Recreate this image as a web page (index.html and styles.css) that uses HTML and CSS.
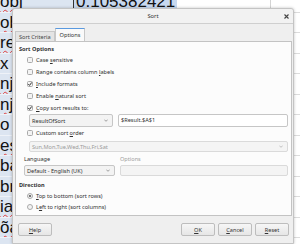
FILE: index.html
```html
<!DOCTYPE html>
<html lang="en">
<head>
  <meta charset="UTF-8" />
  <title>Sort</title>
  <link rel="stylesheet" href="styles.css">
</head>
<body>
  <div class="sheet">
    <div class="row"><div class="ca spell">obj</div><div class="cb"><span class="sel">0.105382421</span></div><div class="cc"></div></div>
    <div class="row"><div class="ca spell">obj</div><div class="cb"></div><div class="cc"></div></div>
    <div class="row"><div class="ca spell">re</div><div class="cb"></div><div class="cc"></div></div>
    <div class="row"><div class="ca">x</div><div class="cb"></div><div class="cc"></div></div>
    <div class="row"><div class="ca spell">nj</div><div class="cb"></div><div class="cc"></div></div>
    <div class="row"><div class="ca spell">nj</div><div class="cb"></div><div class="cc"></div></div>
    <div class="row"><div class="ca">o</div><div class="cb"></div><div class="cc"></div></div>
    <div class="row"><div class="ca spell">eś</div><div class="cb"></div><div class="cc"></div></div>
    <div class="row"><div class="ca">ba</div><div class="cb"></div><div class="cc"></div></div>
    <div class="row"><div class="ca">br</div><div class="cb"></div><div class="cc"></div></div>
    <div class="row"><div class="ca spell">ia</div><div class="cb"></div><div class="cc"></div></div>
    <div class="row"><div class="ca spell">õa</div><div class="cb"></div><div class="cc"></div></div>
    <div class="row"><div class="ca"></div><div class="cb"><span class="num">0.88188278</span></div><div class="cc"></div></div>
  </div>

  <div class="dialog">
    <div class="titlebar">
      <span class="title">Sort</span>
      <svg class="close" width="5" height="5" viewBox="0 0 5 5"><path d="M0.5 0.5L4.5 4.5M4.5 0.5L0.5 4.5" stroke="#444" stroke-width="1.1"/></svg>
    </div>

    <div class="tabs">
      <div class="tab">Sort Criteria</div>
      <div class="tab active">Options</div>
    </div>

    <div class="panel">
      <div class="heading">Sort Options</div>

      <div class="check">
        <svg width="6" height="6" viewBox="0 0 6 6"><rect x="0.5" y="0.5" width="5" height="5" rx="1" fill="#f3f3f3" stroke="#a9a9a9"/></svg>
        <span>Case <u>s</u>ensitive</span>
      </div>
      <div class="check">
        <svg width="6" height="6" viewBox="0 0 6 6"><rect x="0.5" y="0.5" width="5" height="5" rx="1" fill="#f3f3f3" stroke="#a9a9a9"/></svg>
        <span>Range contains column <u>l</u>abels</span>
      </div>
      <div class="check">
        <svg width="6" height="6" viewBox="0 0 6 6"><rect x="0.5" y="0.5" width="5" height="5" rx="1" fill="#f3f3f3" stroke="#a9a9a9"/><path d="M1.3 3.1L2.5 4.4L4.8 1.4" fill="none" stroke="#333" stroke-width="1"/></svg>
        <span><u>I</u>nclude formats</span>
      </div>
      <div class="check">
        <svg width="6" height="6" viewBox="0 0 6 6"><rect x="0.5" y="0.5" width="5" height="5" rx="1" fill="#f3f3f3" stroke="#a9a9a9"/></svg>
        <span>Enable <u>n</u>atural sort</span>
      </div>
      <div class="check">
        <svg width="6" height="6" viewBox="0 0 6 6"><rect x="0.5" y="0.5" width="5" height="5" rx="1" fill="#f3f3f3" stroke="#a9a9a9"/><path d="M1.3 3.1L2.5 4.4L4.8 1.4" fill="none" stroke="#333" stroke-width="1"/></svg>
        <span><u>C</u>opy sort results to:</span>
      </div>

      <div class="copyrow">
        <div class="combo result">
          <span>ResultOfSort</span>
          <svg width="4" height="3" viewBox="0 0 4 3"><path d="M0.3 0.6L2 2.3L3.7 0.6" fill="none" stroke="#777" stroke-width="0.7"/></svg>
        </div>
        <div class="field">$Result.$A$1</div>
      </div>

      <div class="check">
        <svg width="6" height="6" viewBox="0 0 6 6"><rect x="0.5" y="0.5" width="5" height="5" rx="1" fill="#f3f3f3" stroke="#a9a9a9"/></svg>
        <span>Custom sort <u>o</u>rder</span>
      </div>

      <div class="combo disabled wide">
        <span>Sun,Mon,Tue,Wed,Thu,Fri,Sat</span>
        <svg width="4" height="3" viewBox="0 0 4 3"><path d="M0.3 0.6L2 2.3L3.7 0.6" fill="none" stroke="#aaa" stroke-width="0.7"/></svg>
      </div>

      <div class="labels">
        <span class="lang-label">Language</span>
        <span class="opt-label">Options</span>
      </div>
      <div class="langrow">
        <div class="combo lang">
          <span>Default - English (UK)</span>
          <svg width="4" height="3" viewBox="0 0 4 3"><path d="M0.3 0.6L2 2.3L3.7 0.6" fill="none" stroke="#777" stroke-width="0.7"/></svg>
        </div>
        <div class="field disabled"></div>
      </div>

      <div class="heading dir">Direction</div>
      <div class="radio">
        <svg width="6" height="6" viewBox="0 0 6 6"><circle cx="3" cy="3" r="2.5" fill="#f3f3f3" stroke="#a9a9a9"/><circle cx="3" cy="3" r="1.1" fill="#555"/></svg>
        <span><u>T</u>op to bottom (sort rows)</span>
      </div>
      <div class="radio">
        <svg width="6" height="6" viewBox="0 0 6 6"><circle cx="3" cy="3" r="2.5" fill="#f3f3f3" stroke="#a9a9a9"/></svg>
        <span>L<u>e</u>ft to right (sort columns)</span>
      </div>
    </div>

    <div class="buttons">
      <div class="btn help"><u>H</u>elp</div>
      <div class="spacer"></div>
      <div class="btn"><u>O</u>K</div>
      <div class="btn"><u>C</u>ancel</div>
      <div class="btn"><u>R</u>eset</div>
    </div>
  </div>
</body>
</html>
```

FILE: styles.css
```css
body {
  margin: 0;
  width: 300px;
  height: 244px;
  overflow: hidden;
  background-color: #fff;
  font-family: "Liberation Sans", Arial, sans-serif;
  position: relative;
}

/* spreadsheet behind the dialog */
.sheet {
  margin-top: -8px;
}

.row {
  display: flex;
  height: 20.5px;
}

.ca {
  width: 73px;
  background-color: #dce5f1;
  border-bottom: 1px solid #eef2f8;
  font-size: 17px;
  line-height: 20px;
  color: #111;
  box-sizing: border-box;
  overflow: hidden;
  white-space: nowrap;
}

.spell span,
.spell {
  text-decoration: underline wavy #e04040;
  text-decoration-thickness: 1px;
  text-underline-offset: 2px;
}

.cb {
  width: 197px;
  font-size: 17px;
  line-height: 20px;
  color: #111;
  box-sizing: border-box;
  white-space: nowrap;
}

.sel {
  display: inline-block;
  background-color: #c7d8ef;
  border-left: 1px solid #333;
  padding-left: 2px;
  padding-right: 2px;
}

.num {
  display: inline-block;
  padding-left: 12px;
  background-color: #dce5f1;
}

.cc {
  flex: 1;
  border-left: 1px solid #d4d4d4;
  border-bottom: 1px solid #dcdcdc;
  box-sizing: border-box;
}

/* dialog */
.dialog {
  position: absolute;
  left: 12px;
  top: 8px;
  width: 282px;
  height: 236px;
  box-sizing: border-box;
  background-color: #efefef;
  border: 1px solid #c4c4c4;
  border-radius: 3px 3px 0 0;
  box-shadow: 0 0 3px rgba(0, 0, 0, 0.25);
  font-family: "Noto Sans", "Open Sans", sans-serif;
  font-size: 5.6px;
  color: #303030;
  display: flex;
  flex-direction: column;
}

.titlebar {
  height: 14px;
  display: flex;
  align-items: center;
  justify-content: center;
  position: relative;
  background-color: #f2f2f2;
  border-bottom: 1px solid #cfcfcf;
  border-radius: 3px 3px 0 0;
}

.title {
  font-size: 5.8px;
  color: #333;
}

.close {
  position: absolute;
  right: 4px;
  top: 5px;
}

.tabs {
  display: flex;
  align-items: flex-end;
  height: 17px;
  padding-left: 2px;
}

.tab {
  height: 10px;
  line-height: 10px;
  padding: 0 3px;
  border: 1px solid #c8c8c8;
  border-bottom: none;
  background-color: #e4e4e4;
  color: #444;
  box-sizing: border-box;
}

.tab.active {
  height: 13px;
  line-height: 12px;
  background-color: #fafafa;
  border-top: 1px solid #5a9ae0;
  padding: 0 4px;
  color: #333;
}

.panel {
  margin-left: 2px;
  width: 277px;
  height: 175px;
  box-sizing: border-box;
  background-color: #fcfcfc;
  border: 1px solid #c3c3c3;
  padding: 2px 3px 0 3px;
  display: flex;
  flex-direction: column;
}

.heading {
  height: 10px;
  line-height: 10px;
  font-weight: bold;
  color: #333;
}

.heading.dir {
  margin-top: 4px;
}

.check,
.radio {
  height: 12px;
  display: flex;
  align-items: center;
  gap: 3px;
  padding-left: 8px;
}

.radio {
  height: 11px;
}

.copyrow {
  height: 13px;
  display: flex;
  gap: 5px;
  padding-left: 10px;
}

.combo {
  display: flex;
  align-items: center;
  justify-content: space-between;
  box-sizing: border-box;
  border: 1px solid #c6c6c6;
  border-radius: 2px;
  background-color: #f3f3f3;
  padding: 0 4px 0 2px;
}

.combo.result {
  width: 84px;
  height: 13px;
}

.field {
  flex: 1;
  height: 13px;
  line-height: 11px;
  box-sizing: border-box;
  border: 1px solid #c6c6c6;
  border-radius: 2px;
  background-color: #fff;
  padding-left: 2px;
}

.combo.wide {
  margin-left: 10px;
  margin-top: 2px;
  height: 11px;
}

.disabled {
  color: #9a9a9a;
  background-color: #f4f4f4;
  border-color: #dadada;
}

.labels {
  margin-top: 1px;
  height: 12px;
  display: flex;
  align-items: center;
  padding-left: 5px;
}

.lang-label {
  width: 96px;
}

.opt-label {
  color: #a0a0a0;
}

.langrow {
  height: 11px;
  display: flex;
  gap: 5px;
  padding-left: 5px;
}

.combo.lang {
  width: 91px;
  height: 11px;
}

.langrow .field {
  height: 11px;
}

.buttons {
  display: flex;
  gap: 3px;
  padding: 7px 4px 0 5px;
}

.spacer {
  flex: 1;
}

.btn {
  width: 34px;
  height: 13px;
  line-height: 12px;
  text-align: center;
  box-sizing: border-box;
  border: 1px solid #bdbdbd;
  border-radius: 2px;
  background: linear-gradient(#f6f6f6, #e6e6e6);
  color: #333;
}
```
